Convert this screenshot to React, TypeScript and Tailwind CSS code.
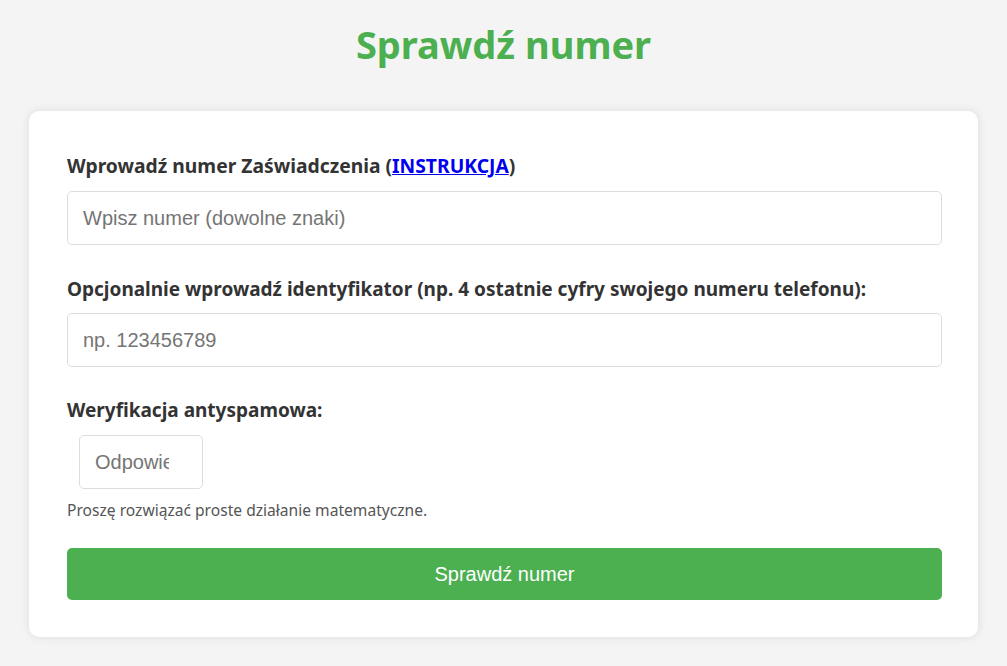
export default function App() {
  return (
    <div className="min-h-screen bg-[#f4f4f4] px-[29px] pt-[19px] pb-8 font-['Noto_Sans',sans-serif] text-[#333]">
      <h1 className="text-center text-[38px] font-bold leading-[50px] text-[#4caf50]">Sprawdź numer</h1>
      <div className="mt-[42px] rounded-[10px] bg-white pl-[38px] pr-[36px] pt-[41px] pb-[37px] shadow-[0_0_10px_rgba(0,0,0,0.1)]">
        <form className="flex flex-col" onSubmit={(e) => e.preventDefault()}>
          <label className="text-[19.3px] font-bold leading-[28px] text-[#333]">
            Wprowadź numer Zaświadczenia (<a href="#" className="text-[#0000ee] underline">INSTRUKCJA</a>)
          </label>
          <input
            type="text"
            placeholder="Wpisz numer (dowolne znaki)"
            className="mt-[11px] h-[54px] w-full rounded-[5px] border border-[#ddd] px-[15px] font-['Liberation_Sans',Arial,sans-serif] text-[20px] text-[#333] placeholder:text-[#757575] outline-none"
          />
          <label className="mt-[30px] text-[19px] font-bold leading-[28px] text-[#333]">
            Opcjonalnie wprowadź identyfikator (np. 4 ostatnie cyfry swojego numeru telefonu):
          </label>
          <input
            type="text"
            placeholder="np. 123456789"
            className="mt-[10px] h-[54px] w-full rounded-[5px] border border-[#ddd] px-[15px] font-['Liberation_Sans',Arial,sans-serif] text-[20px] text-[#333] placeholder:text-[#757575] outline-none"
          />
          <label className="mt-[29px] text-[19px] font-bold leading-[28px] text-[#333]">Weryfikacja antyspamowa:</label>
          <div className="mt-[11px] flex pl-[12px]">
            <input
              type="text"
              placeholder="Odpowiedź"
              className="h-[54px] w-[124px] rounded-[5px] border border-[#ddd] pl-[15px] pr-[33px] font-['Liberation_Sans',Arial,sans-serif] text-[20px] text-[#333] placeholder:text-[#757575] outline-none"
            />
          </div>
          <p className="mt-[9px] text-[15.6px] leading-[24px] text-[#555]">Proszę rozwiązać proste działanie matematyczne.</p>
          <button
            type="submit"
            className="mt-[26px] h-[52px] w-full rounded-[5px] bg-[#4caf50] font-['Liberation_Sans',Arial,sans-serif] text-[20px] text-white"
          >
            Sprawdź numer
          </button>
        </form>
      </div>
    </div>
  );
}
